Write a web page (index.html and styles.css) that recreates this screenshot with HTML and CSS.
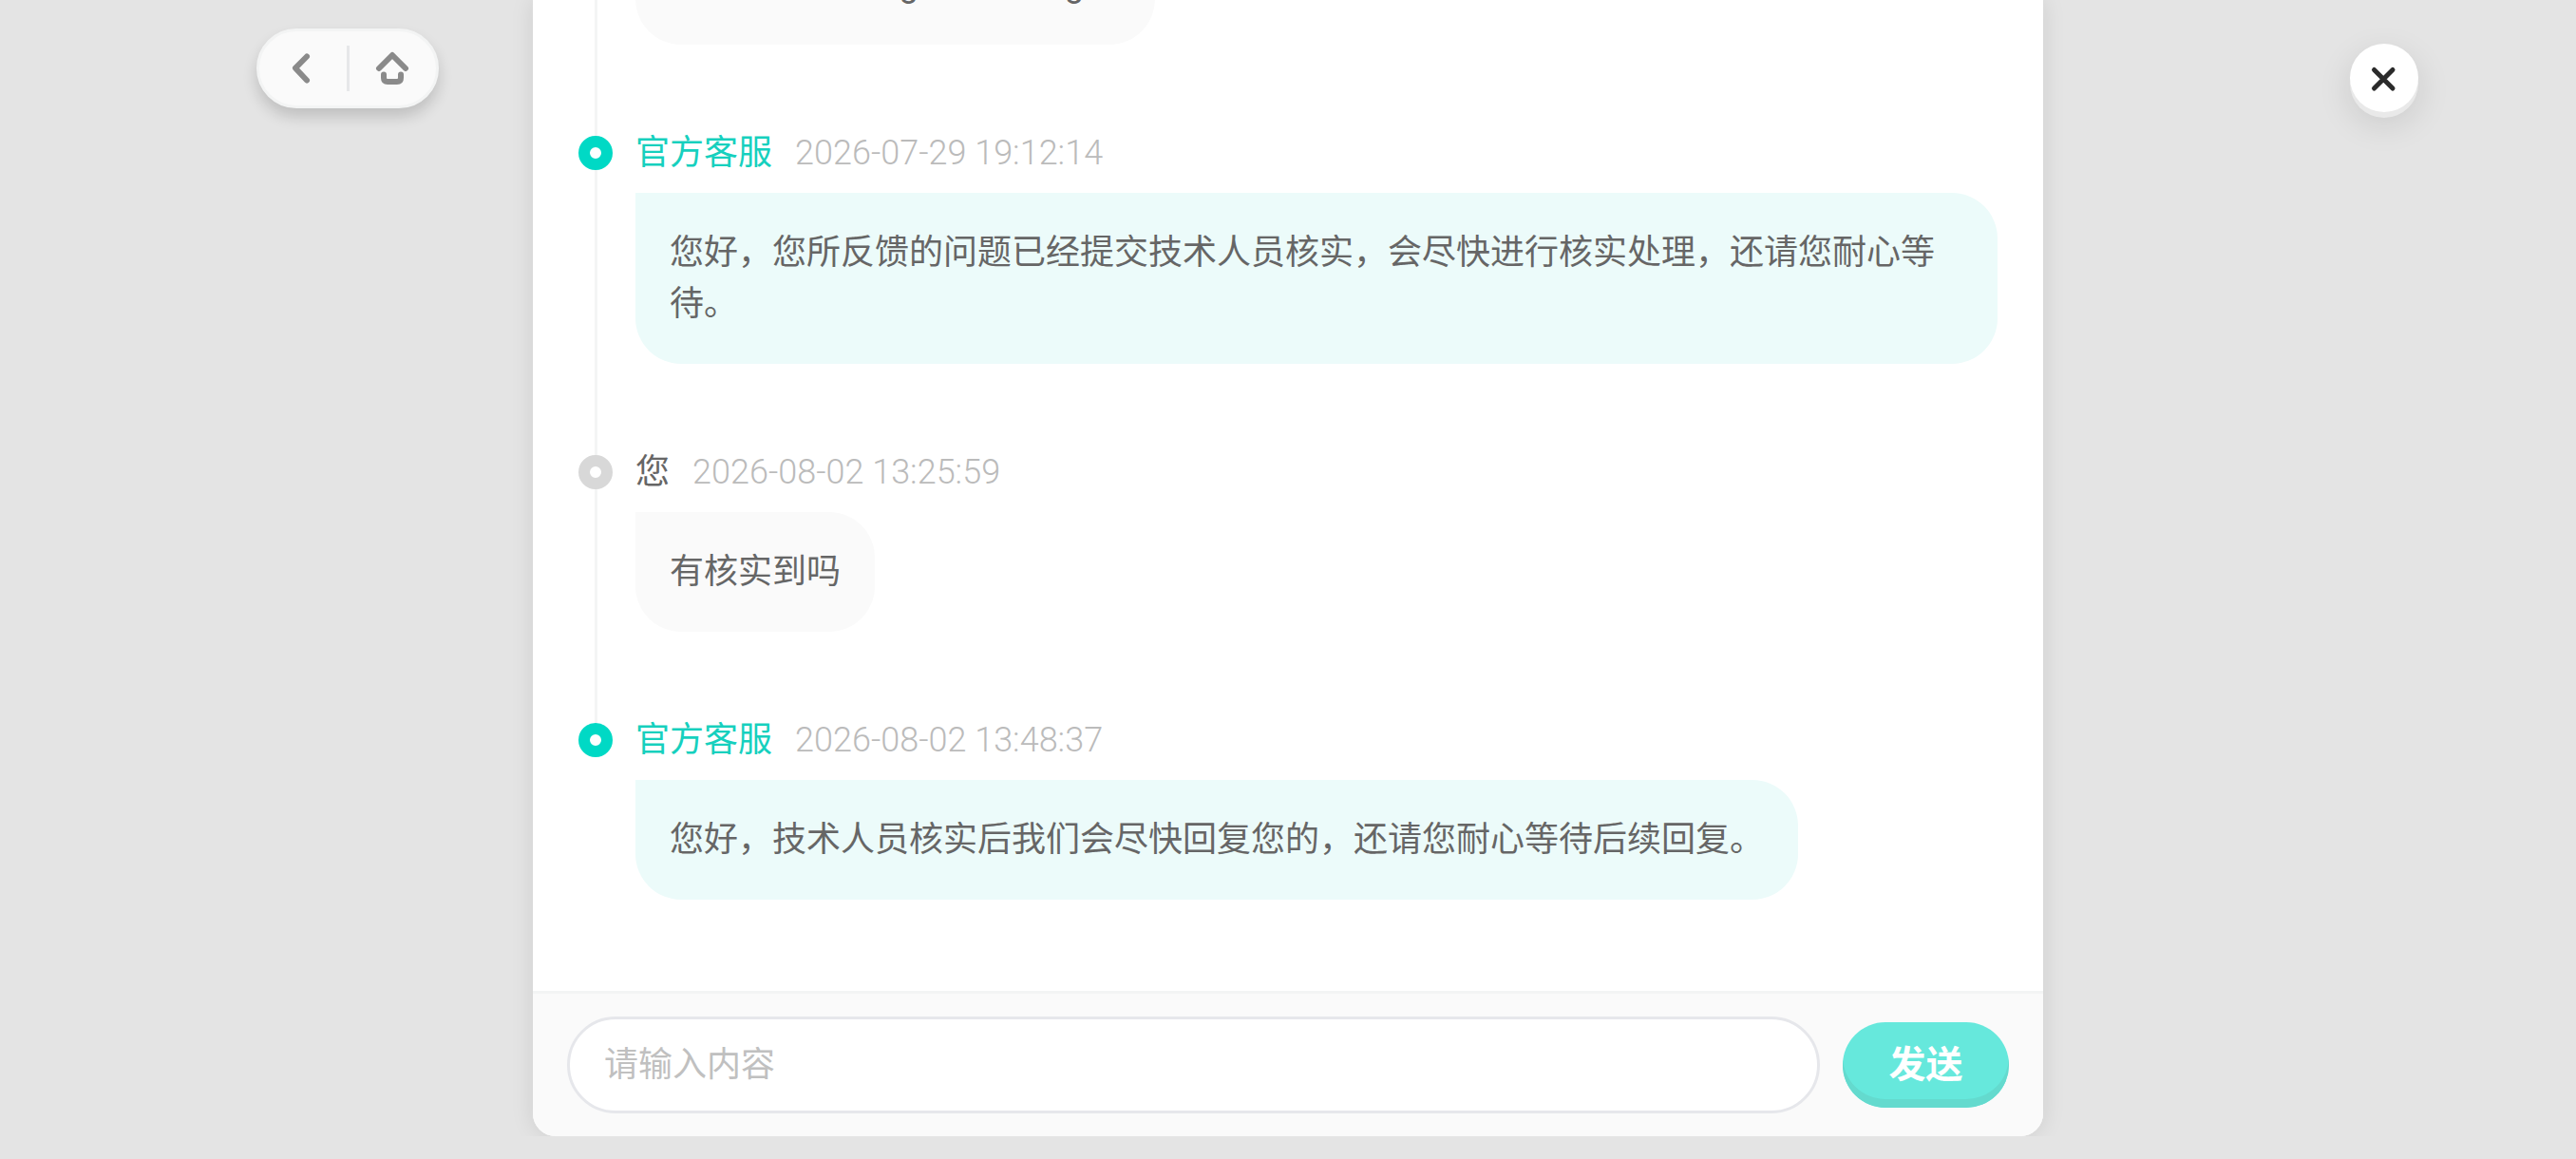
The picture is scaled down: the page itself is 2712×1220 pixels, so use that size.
FILE: index.html
```
<!DOCTYPE html>
<html lang="zh-CN">
<head>
  <meta charset="UTF-8">
  <title>官方客服</title>
  <link rel="stylesheet" href="styles.css">
</head>
<body>
  <div class="page">
    <div class="side">
      <div class="nav">
        <button class="nav-btn" aria-label="返回">
          <svg width="36" height="48" viewBox="0 0 36 48">
            <path d="M22 11.5L10 23.7L22 36.5"/>
          </svg>
        </button>
        <span class="nav-line"></span>
        <button class="nav-btn" aria-label="首页">
          <svg width="36" height="48" viewBox="0 0 36 48">
            <path d="M4 24L18 10L32 24"/>
            <path d="M9 30.5V34Q9 38 13 38H23Q27 38 27 34V30.5"/>
          </svg>
        </button>
      </div>
    </div>

    <div class="panel">
      <div class="messages">
        <div class="message">
          <div class="bubble first">游戏一直loading 是不是bug吗</div>
        </div>
        <div class="message official">
          <div class="message-head">
            <span class="dot"></span>
            <span class="name">官方客服</span>
            <span class="time">2026-07-29 19:12:14</span>
          </div>
          <div class="bubble">您好，您所反馈的问题已经提交技术人员核实，会尽快进行核实处理，还请您耐心等待。</div>
        </div>
        <div class="message">
          <div class="message-head">
            <span class="dot"></span>
            <span class="name">您</span>
            <span class="time">2026-08-02 13:25:59</span>
          </div>
          <div class="bubble">有核实到吗</div>
        </div>
        <div class="message official">
          <div class="message-head">
            <span class="dot"></span>
            <span class="name">官方客服</span>
            <span class="time">2026-08-02 13:48:37</span>
          </div>
          <div class="bubble">您好，技术人员核实后我们会尽快回复您的，还请您耐心等待后续回复。</div>
        </div>
      </div>
      <form class="reply">
        <input type="text" class="reply-input" placeholder="请输入内容">
        <button type="button" class="reply-btn">发送</button>
      </form>
    </div>

    <div class="side side-right">
      <button class="close" aria-label="关闭">
        <svg width="72" height="72" viewBox="0 0 72 72">
          <path d="M25.5 27.5L45 47M45 27.5L25.5 47"/>
        </svg>
      </button>
    </div>
  </div>
</body>
</html>
```
FILE: styles.css
```
* {
  box-sizing: border-box;
}

body {
  margin: 0;
  background-color: #e4e4e4;
  font-family: Roboto, "Noto Sans CJK SC", sans-serif;
  font-size: 36px;
  color: #666;
}

button {
  padding: 0;
  border: none;
  cursor: pointer;
}

svg {
  display: block;
  fill: none;
  stroke-linecap: round;
  stroke-linejoin: round;
}

.page {
  display: flex;
  height: 1220px;
  overflow: hidden;
}

.side {
  width: 561px;
  padding: 30px 0 0 270px;
}

.side-right {
  padding: 46px 0 0 323px;
}

.nav {
  display: flex;
  align-items: center;
  width: 192px;
  height: 84px;
  border: 3px solid #f3f4f4;
  border-radius: 42px;
  background-color: #fafafa;
  box-shadow: 0 9px 15px rgba(0, 0, 0, 0.16);
}

.nav-btn {
  display: flex;
  flex: 1;
  justify-content: center;
  background: none;
}

.nav-btn svg {
  stroke: #8a8a8a;
  stroke-width: 6;
}

.nav-line {
  width: 3px;
  height: 48px;
  background-color: #e6e7e9;
}

.panel {
  display: flex;
  flex-direction: column;
  width: 1590px;
  height: 1196px;
  border-radius: 0 0 24px 24px;
  background-color: #fff;
  box-shadow: 0 0 24px rgba(0, 0, 0, 0.1);
  clip-path: inset(0 -40px 0 -40px);
}

/* newest message stays at the bottom */
.messages {
  display: flex;
  flex: 1;
  flex-direction: column;
  justify-content: flex-end;
  min-height: 0;
  overflow: hidden;
  padding: 0 48px;
}

.message {
  position: relative;
  flex-shrink: 0;
  padding: 0 0 96px 60px;
}

.message::before {
  content: "";
  position: absolute;
  top: 18px;
  left: 17px;
  width: 3px;
  height: 100%;
  background-color: #f4f5f5;
}

.message:last-child::before {
  display: none;
}

.message-head {
  display: flex;
  position: relative;
  align-items: center;
  height: 36px;
  margin: 0 0 24px -60px;
  line-height: 36px;
}

.dot {
  width: 36px;
  height: 36px;
  margin-right: 24px;
  border: 12px solid #d8d8d8;
  border-radius: 50%;
  background-color: #fff;
}

.name {
  margin-right: 24px;
}

.time {
  font-weight: 300;
  color: #bbb;
}

.official .dot {
  border-color: #00d9c5;
}

.official .name {
  color: #16d0be;
}

.bubble {
  width: fit-content;
  padding: 36px;
  border-radius: 0 48px 48px 48px;
  background-color: #fafafa;
  line-height: 54px;
}

.official .bubble {
  background-color: #ecfbfa;
}

.first {
  width: 547px;
  white-space: nowrap;
  word-spacing: -3px;
}

.reply {
  display: flex;
  align-items: center;
  gap: 24px;
  height: 153px;
  padding: 0 36px;
  border-top: 3px solid #f3f4f4;
  border-radius: 0 0 24px 24px;
  background-color: #fafafa;
}

.reply-input {
  flex: 1;
  height: 102px;
  padding: 0 36px;
  border: 3px solid #e6e7eb;
  border-radius: 51px;
  background-color: #fff;
  font: inherit;
}

.reply-input::placeholder {
  color: #c0c0c0;
}

.reply-btn {
  width: 175px;
  height: 90px;
  padding-bottom: 8px;
  border-radius: 45px;
  background-color: #66e8dc;
  box-shadow: inset 0 -9px #64dace;
  color: #fff;
  font-family: inherit;
  font-size: 39px;
  font-weight: bold;
}

.close {
  width: 72px;
  height: 72px;
  border-radius: 50%;
  background-color: #fff;
  box-shadow: 0 6px #e9e9e9, 0 12px 36px rgba(0, 0, 0, 0.12);
}

.close svg {
  stroke: #2b2b2b;
  stroke-width: 5;
}
```
